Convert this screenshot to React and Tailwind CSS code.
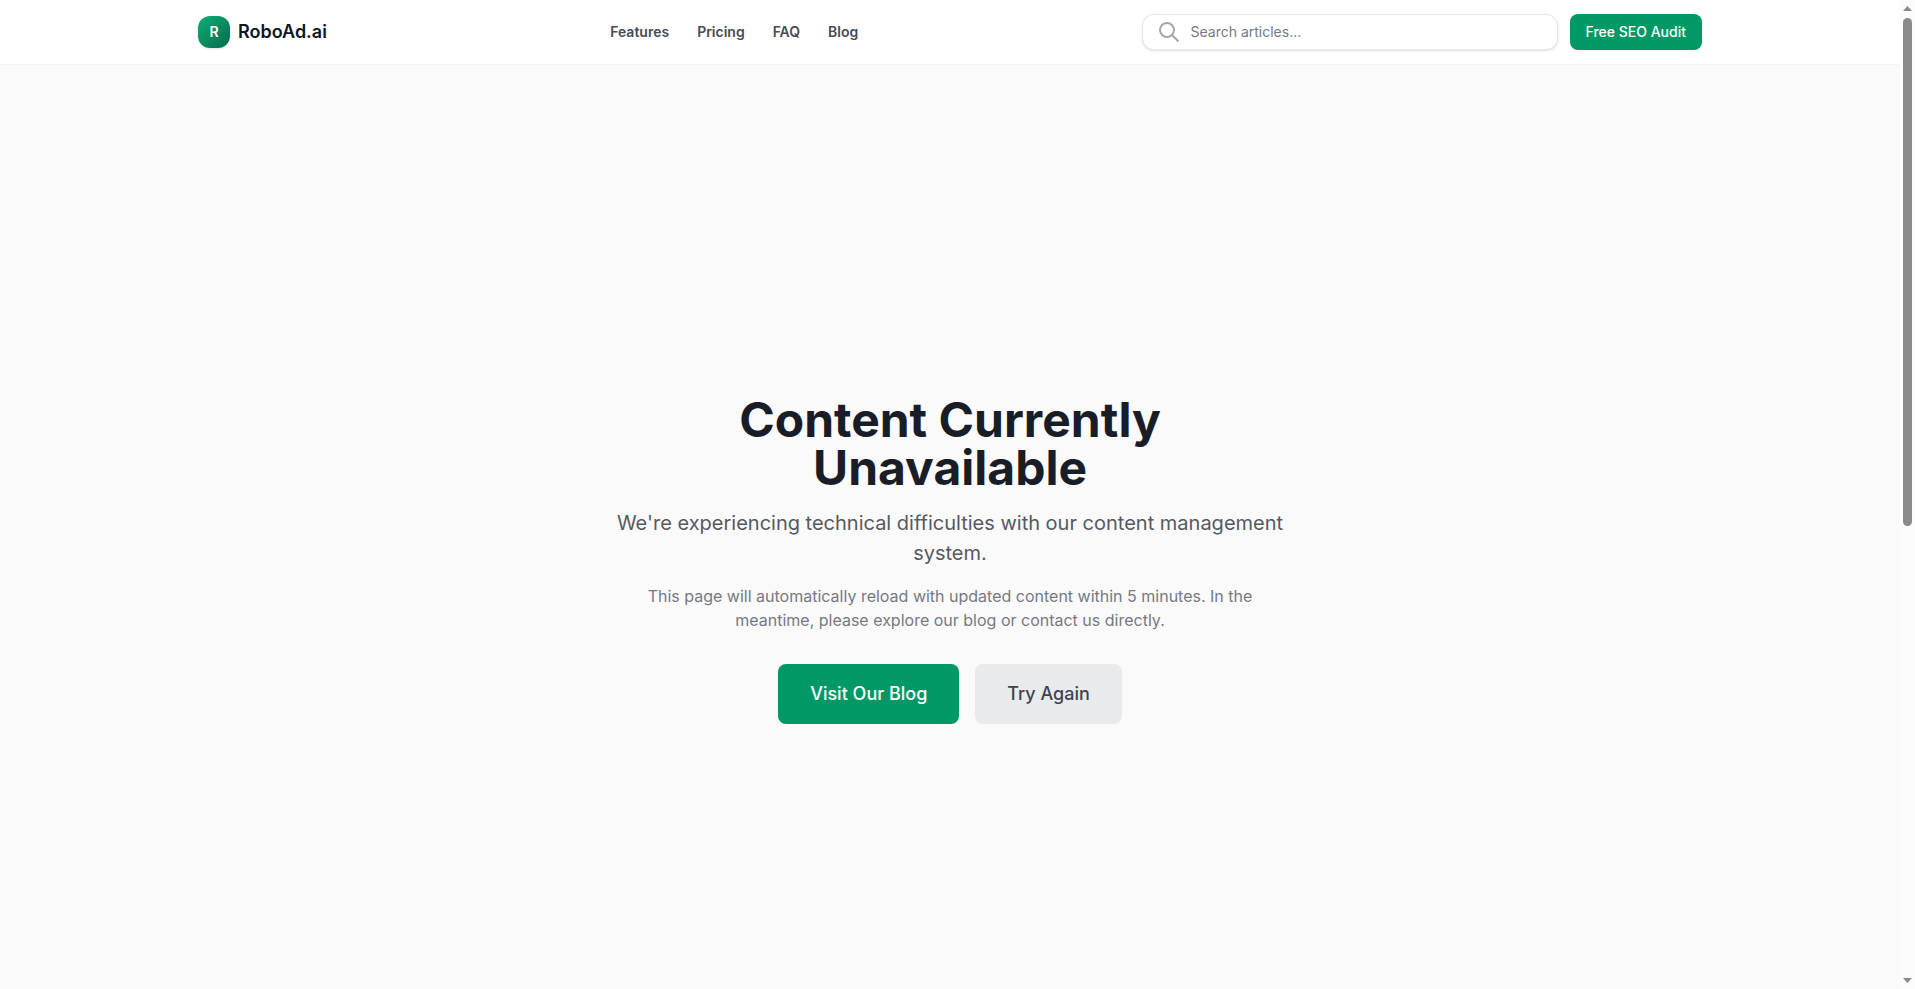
import { useState } from 'react';

const navLinks = [
  { label: 'Features', href: '#features' },
  { label: 'Pricing', href: '#pricing' },
  { label: 'FAQ', href: '#faq' },
  { label: 'Blog', href: '#blog' },
];

function SearchIcon() {
  return (
    <svg
      className="h-5 w-5 shrink-0 text-[#a3a6ac]"
      viewBox="0 0 20 20"
      fill="none"
      stroke="currentColor"
      strokeWidth="2"
      aria-hidden="true"
    >
      <circle cx="8" cy="8" r="7" />
      <path d="M13 13L19.4 19.4" />
    </svg>
  );
}

function Header() {
  const [query, setQuery] = useState('');

  return (
    <header className="border-b border-gray-100 bg-white">
      <div className="mx-auto flex h-16 max-w-screen-2xl items-center justify-between px-4">
        <a href="#home" className="flex items-center gap-2">
          <span className="flex h-8 w-8 items-center justify-center rounded-xl bg-linear-to-br from-[#10b07a] to-[#06694a] text-sm font-semibold text-white shadow-sm">
            R
          </span>
          <span className="text-lg font-semibold text-[#101524]">RoboAd.ai</span>
        </a>

        <nav className="flex items-center gap-7">
          {navLinks.map((link) => (
            <a key={link.label} href={link.href} className="text-sm font-semibold text-[#484c56]">
              {link.label}
            </a>
          ))}
        </nav>

        <div className="flex items-center gap-3">
          <form
            onSubmit={(e) => e.preventDefault()}
            className="flex h-9 w-[416px] items-center gap-3 rounded-xl border border-gray-200 bg-white px-4 shadow-sm"
          >
            <SearchIcon />
            <input
              type="text"
              name="search"
              aria-label="Search articles"
              placeholder="Search articles..."
              value={query}
              onChange={(e) => setQuery(e.target.value)}
              className="w-full bg-transparent text-sm outline-none placeholder:text-[#757983]"
            />
          </form>
          <button
            type="button"
            className="h-9 rounded-lg bg-[#009966] px-4 text-sm font-medium text-white shadow-xs"
          >
            Free SEO Audit
          </button>
        </div>
      </div>
    </header>
  );
}

function Unavailable() {
  return (
    <main className="flex min-h-screen items-center justify-center px-4">
      <div className="w-full max-w-2xl text-center">
        <h1 className="text-5xl leading-none font-bold text-[#191d27]">
          Content Currently
          <br />
          Unavailable
        </h1>
        <p className="mt-4 text-xl leading-[30px] text-[#555962]">
          We're experiencing technical difficulties with our content management
          <br />
          system.
        </p>
        <p className="mt-4 text-base text-[#757983]">
          This page will automatically reload with updated content within 5 minutes. In the
          <br />
          meantime, please explore our blog or contact us directly.
        </p>
        <div className="mt-8 flex justify-center gap-4">
          <a
            href="#blog"
            className="rounded-lg bg-[#009966] px-8 py-4 text-lg font-medium text-white"
          >
            Visit Our Blog
          </a>
          <button
            type="button"
            className="rounded-lg bg-[#e9eaec] px-8 py-4 text-lg font-medium text-[#3f434d]"
          >
            Try Again
          </button>
        </div>
      </div>
    </main>
  );
}

function ScrollRail() {
  return (
    <div className="flex w-[15px] shrink-0 flex-col items-center bg-[#fcfcfc] py-1.5" aria-hidden="true">
      <svg className="h-[5px] w-[9px] shrink-0 text-[#8b8b8b]" viewBox="0 0 9 5" fill="currentColor">
        <path d="M4.5 0L9 5H0z" />
      </svg>
      <div className="my-[7px] w-full grow px-[3px]">
        <div className="h-8/15 rounded-full bg-[#8b8b8b]" />
      </div>
      <svg className="h-[5px] w-[9px] shrink-0 text-[#8b8b8b]" viewBox="0 0 9 5" fill="currentColor">
        <path d="M4.5 5L0 0h9z" />
      </svg>
    </div>
  );
}

export default function App() {
  return (
    <div className="flex h-screen bg-[#fafafa] font-['Inter',sans-serif]">
      <div className="min-w-0 grow overflow-y-auto [scrollbar-width:none]">
        <Header />
        <Unavailable />
      </div>
      <ScrollRail />
    </div>
  );
}
